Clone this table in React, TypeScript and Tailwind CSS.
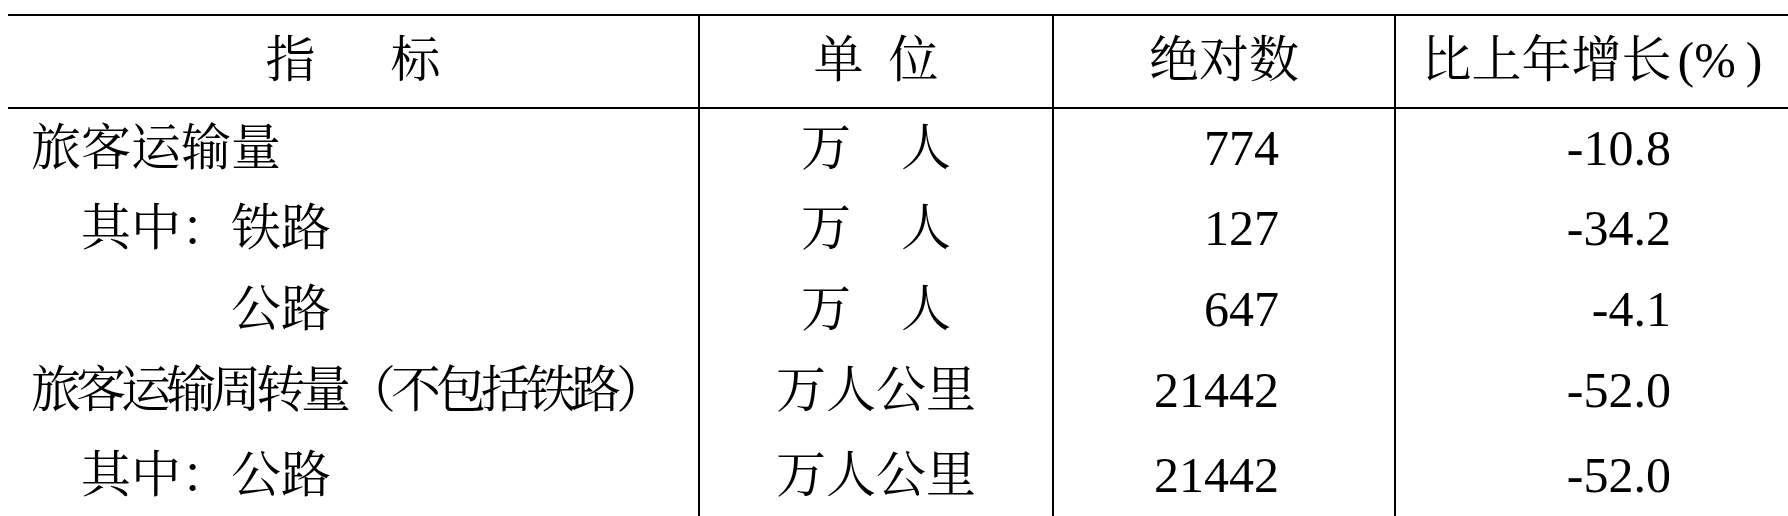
import React from "react";

type Row = {
  name: string;
  indent: string;
  unit: React.ReactNode;
  value: string;
  change: string;
  height: string;
};

const wanRen = (
  <>
    万<span className="inline-block w-[1em]" />人
  </>
);

const rows: Row[] = [
  { name: "旅客运输量", indent: "pl-[23px]", unit: wanRen, value: "774", change: "-10.8", height: "h-[78px]" },
  { name: "其中：铁路", indent: "pl-[73px]", unit: wanRen, value: "127", change: "-34.2", height: "h-[81px]" },
  { name: "公路", indent: "pl-[223px]", unit: wanRen, value: "647", change: "-4.1", height: "h-[82px]" },
  // this one is squeezed in the source so it fits the column
  { name: "旅客运输周转量（不包括铁路）", indent: "pl-[23px] tracking-[-5px]", unit: "万人公里", value: "21442", change: "-52.0", height: "h-[80px]" },
  { name: "其中：公路", indent: "pl-[73px]", unit: "万人公里", value: "21442", change: "-52.0", height: "h-[90px]" },
];

export default function App() {
  return (
    <div className="h-[516px] w-[1788px] overflow-hidden bg-white text-black">
      <div
        className="ml-[8px] mt-[14px] border-t-2 border-black text-[50px] leading-none"
        style={{ fontFamily: '"Liberation Serif", "Noto Serif CJK SC", "Noto Sans CJK SC", serif' }}
      >
        {/* header */}
        <div className="grid h-[93px] grid-cols-[690px_354px_342px_1fr] border-b-2 border-black">
          <div className="flex items-center justify-center pb-[4px]">
            指<span className="inline-block w-[1.5em]" />标
          </div>
          <div className="flex items-center justify-center border-l-2 border-black pb-[4px]">
            单<span className="inline-block w-[0.5em]" />位
          </div>
          <div className="flex items-center justify-center border-l-2 border-black pb-[4px]">
            绝对数
          </div>
          <div className="flex items-center justify-center border-l-2 border-black pb-[4px]">
            <span className="whitespace-nowrap">
              比上年增长<span className="ml-[6px]">(</span>%<span className="ml-[10px]">)</span>
            </span>
          </div>
        </div>

        {/* body */}
        {rows.map((r, i) => (
          <div key={i} className={`grid grid-cols-[690px_354px_342px_1fr] ${r.height}`}>
            <div className={`flex items-center whitespace-nowrap ${r.indent}`}>{r.name}</div>
            <div className="flex items-center justify-center border-l-2 border-black">{r.unit}</div>
            <div className="flex items-center justify-end border-l-2 border-black pr-[115px]">{r.value}</div>
            <div className="flex items-center justify-end border-l-2 border-black pr-[117px]">{r.change}</div>
          </div>
        ))}
      </div>
    </div>
  );
}
